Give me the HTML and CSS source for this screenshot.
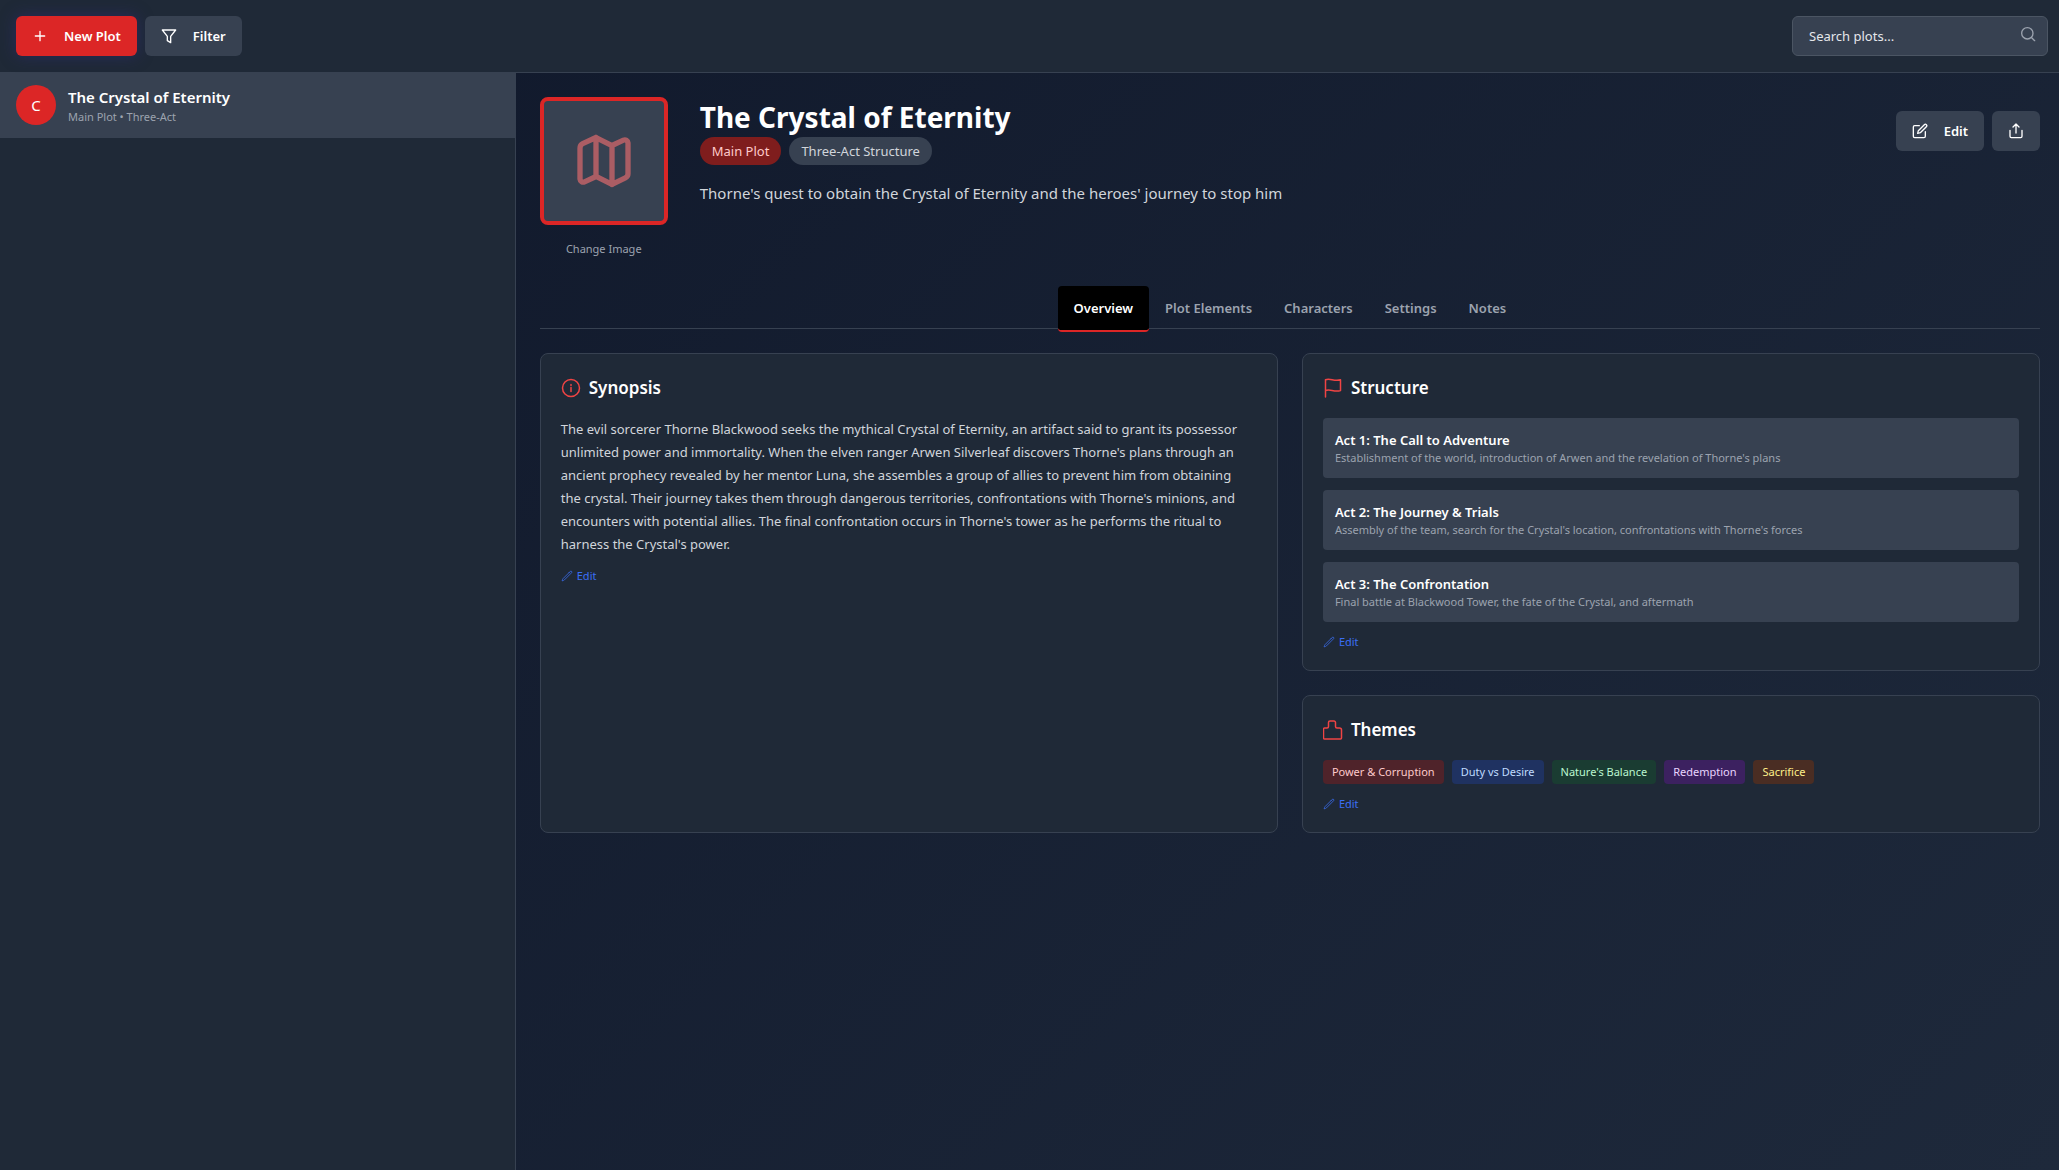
FILE: index.html
```html
<!DOCTYPE html>
<html lang="en">
<head>
<meta charset="utf-8">
<meta name="viewport" content="width=device-width, initial-scale=1">
<title>Plots</title>
<link rel="stylesheet" href="styles.css">
</head>
<body>
<svg class="defs" aria-hidden="true">
  <symbol id="i-pencil" viewBox="0 0 24 24"><path d="M16.862 4.487l1.687-1.688a1.875 1.875 0 112.652 2.652L6.832 19.82a4.5 4.5 0 01-1.897 1.13l-2.685.8.8-2.685a4.5 4.5 0 011.13-1.897L16.863 4.487z"/></symbol>
</svg>
<header class="topbar">
  <div class="group">
    <button class="btn btn-primary" type="button">
      <svg class="icon" viewBox="0 0 24 24" stroke-width="2"><path d="M12 5v14M5 12h14"/></svg>
      New Plot
    </button>
    <button class="btn" type="button">
      <svg class="icon" viewBox="0 0 24 24" stroke-width="2"><path d="M2 3h20l-7.500 9.500V22l-5-3v-6.500z"/></svg>
      Filter
    </button>
  </div>
  <div class="search">
    <input type="text" aria-label="Search plots" placeholder="Search plots...">
    <svg class="icon search-icon" viewBox="0 0 24 24" stroke-width="2"><circle cx="11" cy="11" r="8.500"/><path d="M17.500 17.500L22 22"/></svg>
  </div>
</header>
<div class="layout">
  <aside class="sidebar">
    <a class="plot-item" href="#crystal">
      <span class="avatar">C</span>
      <span class="plot-text">
        <span class="plot-name">The Crystal of Eternity</span>
        <span class="plot-meta">Main Plot • Three-Act</span>
      </span>
    </a>
  </aside>
  <main class="content" id="crystal">
    <section class="hero">
      <div class="cover-col">
        <div class="cover">
          <svg class="cover-icon" viewBox="0 0 24 24" stroke-width="2"><path d="M3 7.200v11.600a1.200 1.200 0 0 0 1.700 1L9 17.800l6 3 5-2.500c.600-.300 1-.800 1-1.500V5.200a1.200 1.200 0 0 0-1.700-1L15 6.200l-6-3-5 2.300c-.600.300-1 .900-1 1.700zM9 3.200v14.600M15 6.200v14.600"/></svg>
        </div>
        <button class="change" type="button">Change Image</button>
      </div>
      <div class="hero-body">
        <div class="hero-top">
          <div>
            <h1>The Crystal of Eternity</h1>
            <div class="group">
              <span class="pill pill-main">Main Plot</span>
              <span class="pill">Three-Act Structure</span>
            </div>
          </div>
          <div class="group">
            <button class="btn" type="button">
              <svg class="icon" viewBox="0 0 24 24" stroke-width="2"><path d="M11 4H4a2 2 0 0 0-2 2v14a2 2 0 0 0 2 2h14a2 2 0 0 0 2-2v-7M18.500 2.500a2.100 2.100 0 0 1 3 3L12.500 14.500 8.500 15.500l1-4z"/></svg>
              Edit
            </button>
            <button class="btn" type="button" aria-label="Share">
              <svg class="icon" viewBox="0 0 24 24" stroke-width="2"><path d="M3 11v9a2 2 0 0 0 2 2h14a2 2 0 0 0 2-2v-9M7.500 6L12 1.500 16.500 6M12 1.500V15"/></svg>
            </button>
          </div>
        </div>
        <p class="lead">Thorne's quest to obtain the Crystal of Eternity and the heroes' journey to stop him</p>
      </div>
    </section>
    <nav class="tabs" aria-label="Plot sections">
      <button class="tab active" type="button">Overview</button>
      <button class="tab" type="button">Plot Elements</button>
      <button class="tab" type="button">Characters</button>
      <button class="tab" type="button">Settings</button>
      <button class="tab" type="button">Notes</button>
    </nav>
    <div class="cards">
      <section class="card">
        <h2><svg class="h-icon" viewBox="0 0 20 20" stroke-width="1.500"><circle cx="10" cy="10" r="8.500"/><path d="M10 9.500v4M10 6.500v1"/></svg>Synopsis</h2>
        <p class="synopsis">The evil sorcerer Thorne Blackwood seeks the mythical Crystal of Eternity, an artifact said to grant its possessor unlimited power and immortality. When the elven ranger Arwen Silverleaf discovers Thorne's plans through an ancient prophecy revealed by her mentor Luna, she assembles a group of allies to prevent him from obtaining the crystal. Their journey takes them through dangerous territories, confrontations with Thorne's minions, and encounters with potential allies. The final confrontation occurs in Thorne's tower as he performs the ritual to harness the Crystal's power.</p>
        <button class="edit" type="button"><svg viewBox="0 0 24 24"><use href="#i-pencil"/></svg>Edit</button>
      </section>
      <div class="stack">
        <section class="card">
          <h2><svg class="h-icon" viewBox="0 0 20 20" stroke-width="1.500"><path d="M2.500 19V1.800C7-.3 11 3.800 17.500 1.800v10.800C11 14.600 7 10.500 2.500 12.600"/></svg>Structure</h2>
          <ul class="acts">
            <li><h3>Act 1: The Call to Adventure</h3><p>Establishment of the world, introduction of Arwen and the revelation of Thorne's plans</p></li>
            <li><h3>Act 2: The Journey &amp; Trials</h3><p>Assembly of the team, search for the Crystal's location, confrontations with Thorne's forces</p></li>
            <li><h3>Act 3: The Confrontation</h3><p>Final battle at Blackwood Tower, the fate of the Crystal, and aftermath</p></li>
          </ul>
          <button class="edit" type="button"><svg viewBox="0 0 24 24"><use href="#i-pencil"/></svg>Edit</button>
        </section>
        <section class="card">
          <h2><svg class="h-icon" viewBox="0 0 20 20" stroke-width="1.500"><path d="M.500 9a1 1 0 0 1 1-1h2.500a1.500 1.500 0 0 0 1.500-1.500V2.500a1.500 1.500 0 0 1 1.500-1.500h4a1.500 1.500 0 0 1 1.500 1.500v4A1.500 1.500 0 0 0 14 8h2.500a2 2 0 0 1 2 2v8a1 1 0 0 1-1 1H1.500a1 1 0 0 1-1-1z"/></svg>Themes</h2>
          <div class="group tags">
            <span class="tag red">Power &amp; Corruption</span>
            <span class="tag blue">Duty vs Desire</span>
            <span class="tag green">Nature's Balance</span>
            <span class="tag purple">Redemption</span>
            <span class="tag yellow">Sacrifice</span>
          </div>
          <button class="edit" type="button"><svg viewBox="0 0 24 24"><use href="#i-pencil"/></svg>Edit</button>
        </section>
      </div>
    </div>
  </main>
</div>
</body>
</html>
```
FILE: styles.css
```css
*, *::before, *::after { box-sizing: border-box; }
body {
  margin: 0;
  min-height: 100vh;
  display: flex;
  flex-direction: column;
  background: linear-gradient(135deg, #0f172a, #1e293b);
  color: #fff;
  font-family: "Segoe UI", "Noto Sans", "Open Sans", sans-serif;
  font-size: 13px;
  line-height: 20px;
}
h1, h2, h3, p, ul { margin: 0; padding: 0; }
ul { list-style: none; }
button, input { font: inherit; color: inherit; }
button { border: 0; background: none; padding: 0; cursor: pointer; }
svg { fill: none; stroke: currentColor; stroke-linecap: round; stroke-linejoin: round; flex: none; }
.defs { display: none; }

.topbar {
  display: flex;
  justify-content: space-between;
  align-items: center;
  padding: 16px 11px 16px 16px;
  background: #1f2937;
  border-bottom: 1px solid #374151;
}
.group { display: flex; gap: 8px; }
.btn {
  display: flex;
  align-items: center;
  gap: 16px;
  height: 40px;
  padding: 0 16px;
  border-radius: 6px;
  background: #374151;
  font-weight: 600;
}
.btn-primary { background: #dc2626; box-shadow: 0 0 15px rgba(49, 46, 129, 0.5); }
.icon { width: 16px; height: 16px; }
.search { position: relative; width: 256px; }
.search input {
  display: block;
  width: 100%;
  height: 40px;
  padding: 0 40px 0 16px;
  border: 1px solid #4b5563;
  border-radius: 6px;
  background: #374151;
}
.search input::placeholder { color: #e5e7eb; opacity: 1; }
.search-icon { position: absolute; right: 12px; top: 10px; color: #9ca3af; }

.layout { flex: 1; display: flex; }
.sidebar {
  box-sizing: content-box;
  width: 25%;
  flex: none;
  background: #1f2937;
  border-right: 1px solid #374151;
}
.plot-item {
  display: flex;
  align-items: center;
  gap: 12px;
  padding: 12px 16px;
  border-bottom: 1px solid #374151;
  background: #374151;
  color: inherit;
  text-decoration: none;
}
.avatar {
  display: flex;
  align-items: center;
  justify-content: center;
  width: 40px;
  height: 40px;
  border-radius: 50%;
  background: #dc2626;
  font-size: 15px;
}
.plot-text { display: flex; flex-direction: column; }
.plot-name { font-size: 15px; line-height: 24px; font-weight: 600; }
.plot-meta { font-size: 11px; line-height: 16px; color: #9ca3af; }

.content { flex: 1; min-width: 0; padding: 24px 19px 24px 24px; }
.hero { display: flex; gap: 32px; margin-bottom: 21px; }
.cover-col { display: flex; flex-direction: column; align-items: center; gap: 8px; }
.cover {
  display: flex;
  align-items: center;
  justify-content: center;
  width: 128px;
  height: 128px;
  border: 4px solid #dc2626;
  border-radius: 8px;
  background: #374151;
}
.cover-icon { width: 64px; height: 64px; color: #f87171; opacity: 0.6; }
.change { padding: 8px; font-size: 11px; line-height: 16px; color: #9ca3af; }
.hero-body { flex: 1; }
.hero-top { display: flex; justify-content: space-between; align-items: center; }
h1 { font-size: 28px; line-height: 40px; font-weight: 700; }
.pill { padding: 4px 12px; border-radius: 14px; background: #374151; color: #d1d5db; }
.pill-main { background: #7f1d1d; color: #fecaca; }
.lead { margin-top: 16px; font-size: 15px; line-height: 24px; color: #d1d5db; }

.tabs {
  display: flex;
  justify-content: center;
  height: 43px;
  margin-bottom: 24px;
  border-bottom: 1px solid #374151;
}
.tab {
  height: 46px;
  padding: 0 16px;
  border-bottom: 2px solid transparent;
  border-radius: 4px;
  color: #9ca3af;
  font-weight: 600;
}
.tab.active { background: #000; border-bottom-color: #dc2626; color: #fff; }

.cards { display: grid; grid-template-columns: 1fr 1fr; gap: 24px; }
.stack { display: flex; flex-direction: column; gap: 24px; }
.card { padding: 20px; border: 1px solid #374151; border-radius: 8px; background: #1f2937; }
h2 {
  display: flex;
  align-items: center;
  gap: 8px;
  margin-bottom: 16px;
  font-size: 17px;
  line-height: 28px;
  font-weight: 600;
}
.h-icon { width: 20px; height: 20px; color: #ef4444; }
.synopsis { padding-right: 8px; line-height: 23px; color: #d1d5db; }
.edit {
  display: flex;
  align-items: center;
  gap: 4px;
  margin-top: 12px;
  font-size: 11px;
  line-height: 16px;
  color: #3b6ff5;
}
.edit svg { width: 12px; height: 12px; stroke-width: 1.5; }
.acts { display: flex; flex-direction: column; gap: 12px; }
.acts li { padding: 12px; border-radius: 4px; background: #374151; }
.acts h3 { font-size: 13px; line-height: 20px; font-weight: 600; }
.acts p { font-size: 11px; line-height: 16px; color: #9ca3af; }
.tag { padding: 4px 9px; border-radius: 4px; font-size: 11px; line-height: 16px; }
.red { background: #4f232a; color: #fecaca; }
.blue { background: #1f3261; color: #bfdbfe; }
.green { background: #1a3c32; color: #bbf7d0; }
.purple { background: #3c2160; color: #e9d5ff; }
.yellow { background: #4a2d23; color: #fef08a; }
```
